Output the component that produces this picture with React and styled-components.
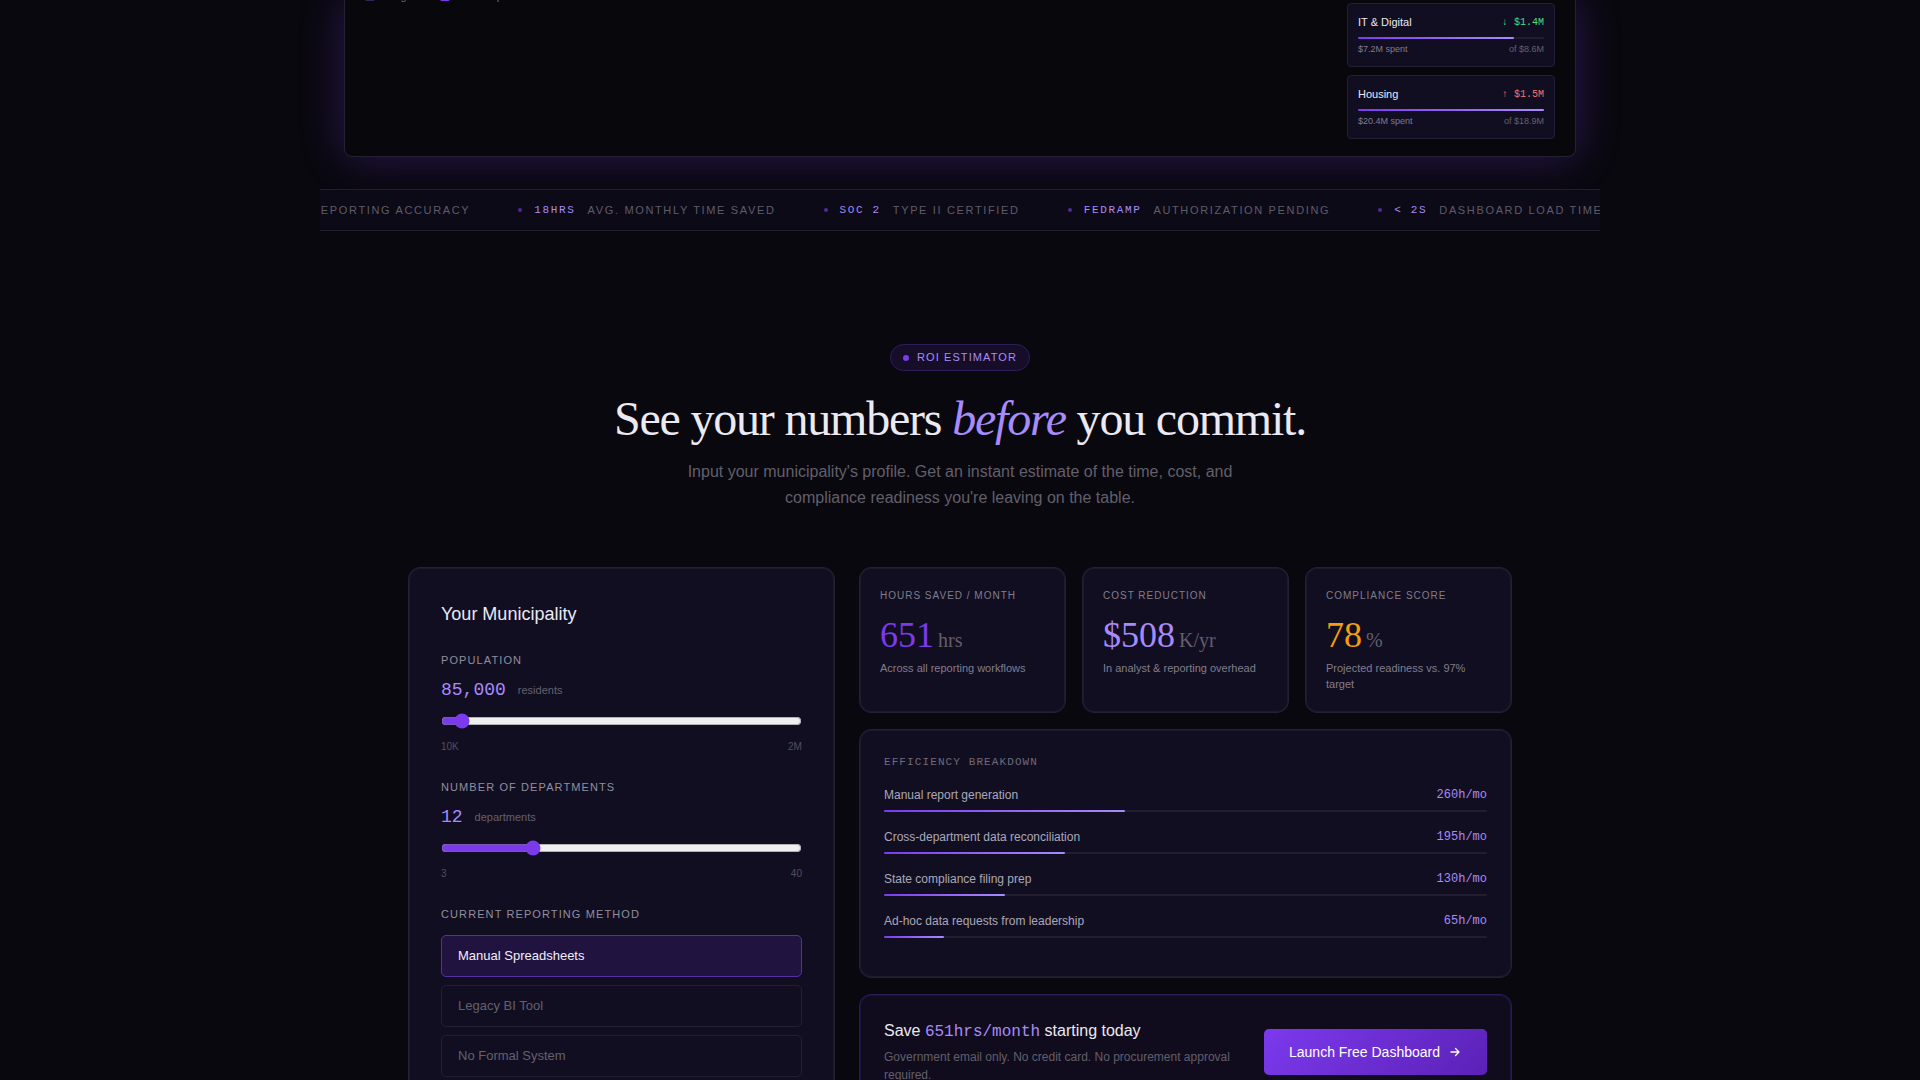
import React, { useState } from "react";
import styled, { createGlobalStyle } from "styled-components";

const sans = `"Liberation Sans", Arial, sans-serif`;
const serif = `"Liberation Serif", "Times New Roman", serif`;
const mono = `"Liberation Mono", "Courier New", monospace`;

const GlobalStyle = createGlobalStyle`
  *, *::before, *::after { box-sizing: border-box; }
  body {
    margin: 0;
    background: #09080e;
    color: #ebe9f2;
    font-family: ${sans};
    font-size: 16px;
    line-height: 24px;
  }
  h2, h3, p, fieldset, legend { margin: 0; padding: 0; }
`;

const Page = styled.div`
  height: 100vh;
  overflow: hidden;
`;

const Hero = styled.section`
  max-width: 1280px;
  margin: 0 auto;
`;

const Preview = styled.div`
  display: flex;
  justify-content: space-between;
  margin: 0 24px 32px;
  padding: 0 20px 17px;
  border: 1px solid #252133;
  border-top: 0;
  border-radius: 0 0 8px 8px;
  background: #08070c;
  box-shadow: 0 0 44px rgba(116, 58, 237, 0.32);
`;

const Legend = styled.div`
  display: flex;
  gap: 24px;
  height: 16px;
  margin-top: -12px;
  font-size: 11px;
  line-height: 16px;
  color: #6b6878;
`;

const LegendItem = styled.span`
  display: flex;
  align-items: center;
  gap: 6px;

  &::before {
    content: "";
    width: 10px;
    height: 10px;
    border-radius: 2px;
    background: ${(p) => p.$color};
  }
`;

const BudgetList = styled.div`
  display: flex;
  flex-direction: column;
  gap: 8px;
  width: 208px;
  padding-top: 3px;
`;

const BudgetCard = styled.article`
  padding: 10px;
  border: 1px solid #241f35;
  border-radius: 4px;
  background: #120e22;
`;

const Split = styled.div`
  display: flex;
  justify-content: space-between;
  align-items: center;
`;

const BudgetName = styled.span`
  font-size: 11px;
  line-height: 17px;
`;

const BudgetDelta = styled.span`
  font-family: ${mono};
  font-size: 10px;
  line-height: 15px;
  color: ${(p) => (p.$over ? "#f87171" : "#4ade80")};
`;

const BudgetNote = styled.span`
  font-size: 9px;
  line-height: 13px;
  color: ${(p) => (p.$dim ? "#63606d" : "#807d8b")};
`;

const Track = styled.div`
  height: 2px;
  margin: ${(p) => p.$margin || "0"};
  border-radius: 1px;
  background: #221e30;
`;

const Fill = styled.div`
  height: 100%;
  border-radius: 1px;
  background: linear-gradient(90deg, #7c3aed, #a78bfa);
`;

const Ticker = styled.div`
  overflow: hidden;
  border-top: 1px solid #221f2d;
  border-bottom: 1px solid #221f2d;
  background: #0c0a17;
  padding: 12px 0;
`;

const TickerTrack = styled.div`
  display: flex;
  width: max-content;
  transform: translateX(-102px);
`;

const TickerItem = styled.span`
  display: flex;
  align-items: center;
  gap: 12px;
  padding: 0 24px;
  font-size: 11px;
  line-height: 16px;
  letter-spacing: 0.15em;
  text-transform: uppercase;
  white-space: nowrap;
  color: #5f5c69;

  &::before {
    content: "";
    width: 4px;
    height: 4px;
    border-radius: 50%;
    background: #4f2a9a;
  }

  strong {
    font-family: ${mono};
    font-weight: 500;
    color: #a78bfa;
  }
`;

const Estimator = styled.section`
  max-width: 1200px;
  margin: 0 auto;
  padding: 113px 48px 112px;
`;

const Intro = styled.header`
  display: flex;
  flex-direction: column;
  align-items: center;
  margin-bottom: 56px;
  text-align: center;
`;

const Badge = styled.span`
  display: flex;
  align-items: center;
  gap: 8px;
  margin-bottom: 24px;
  padding: 4px 12px;
  border: 1px solid #2f1d5c;
  border-radius: 14px;
  background: #160e29;
  font-size: 11px;
  line-height: 17px;
  letter-spacing: 0.1em;
  text-transform: uppercase;
  color: #a78bfa;

  &::before {
    content: "";
    width: 6px;
    height: 6px;
    border-radius: 50%;
    background: #7c3aed;
  }
`;

const Title = styled.h2`
  margin-bottom: 16px;
  font-family: ${serif};
  font-size: 48px;
  font-weight: 400;
  line-height: 48px;
  letter-spacing: -0.025em;

  em { color: #a78bfa; }
`;

const Lead = styled.p`
  max-width: 560px;
  line-height: 26px;
  color: #625f6b;
`;

const Columns = styled.div`
  display: grid;
  grid-template-columns: 17fr 26fr;
  gap: 24px;
`;

const Results = styled.div`
  display: flex;
  flex-direction: column;
  gap: 16px;
`;

const Card = styled.div`
  padding: ${(p) => p.$pad || "24px"};
  border: 1px solid ${(p) => (p.$accent ? "#281d56" : "#242032")};
  border-radius: 12px;
  background: ${(p) => (p.$accent ? "#100c1d" : "#120e21")};
  box-shadow: inset 0 0 0 1px ${(p) => (p.$accent ? "#19133d" : "#1e1a2d")};
`;

const CardTitle = styled.h3`
  margin-bottom: 22px;
  font-size: 18px;
  font-weight: 400;
  line-height: 29px;
`;

const Field = styled.div`
  margin-bottom: 23px;
`;

const Caps = `
  display: block;
  font-size: 11px;
  line-height: 18px;
  letter-spacing: 0.1em;
  text-transform: uppercase;
  color: #918e9d;
`;

const FieldLabel = styled.label`
  ${Caps}
`;

const Reading = styled.div`
  display: flex;
  align-items: center;
  gap: 12px;
  margin: 8px 0;
  font-size: 11px;
  line-height: 27px;
  color: #63606d;

  output {
    font-family: ${mono};
    font-size: 18px;
    color: #a78bfa;
  }
`;

const Range = styled.input`
  display: block;
  width: 100%;
  height: 18px;
  margin: 0 0 8px;
  accent-color: #7c3aed;
  cursor: pointer;
`;

const Bounds = styled(Split)`
  font-size: 10px;
  line-height: 17px;
  color: #514e5c;
`;

const Methods = styled.fieldset`
  border: 0;

  legend { ${Caps} margin-bottom: 12px; }
`;

const MethodList = styled.div`
  display: flex;
  flex-direction: column;
  gap: 8px;
`;

const Method = styled.button`
  padding: 10px 16px;
  border: 1px solid ${(p) => (p.$active ? "#56309f" : "#231f32")};
  border-radius: 5px;
  background: ${(p) => (p.$active ? "#211340" : "transparent")};
  color: ${(p) => (p.$active ? "#f0eef6" : "#63606d")};
  font-family: ${sans};
  font-size: 13px;
  line-height: 20px;
  text-align: left;
  cursor: pointer;
`;

const Metrics = styled.div`
  display: grid;
  grid-template-columns: repeat(3, 1fr);
  gap: 16px;
`;

const MetricLabel = styled.div`
  margin-bottom: 12px;
  font-size: 10px;
  line-height: 15px;
  letter-spacing: 0.1em;
  text-transform: uppercase;
  color: #807d8b;
`;

const MetricValue = styled.div`
  margin-bottom: 5px;
  font-family: ${serif};
  font-size: 36px;
  line-height: 40px;
  color: ${(p) => p.$color};

  small {
    margin-left: 4px;
    font-size: 20px;
    line-height: 20px;
    color: #625f6b;
  }
`;

const MetricNote = styled.p`
  font-size: 11px;
  line-height: 16px;
  color: #807d8b;
`;

const Overline = styled.h3`
  margin-bottom: 15px;
  font-family: ${mono};
  font-size: 11px;
  font-weight: 400;
  line-height: 16px;
  letter-spacing: 0.1em;
  text-transform: uppercase;
  color: #6e6b7a;
`;

const Breakdown = styled.div`
  margin-bottom: 15px;
  font-size: 12px;
  line-height: 20px;
  color: #aba8b7;

  span:last-child {
    font-family: ${mono};
    color: #a78bfa;
  }
`;

const Offer = styled(Split)`
  gap: 24px;
`;

const OfferTitle = styled.h3`
  margin-bottom: 4px;
  font-size: 16px;
  font-weight: 400;
  line-height: 24px;

  span {
    font-family: ${mono};
    color: #a78bfa;
  }
`;

const OfferNote = styled.p`
  font-size: 12px;
  line-height: 18px;
  color: #625f6b;
`;

const Launch = styled.button`
  display: flex;
  flex-shrink: 0;
  align-items: center;
  gap: 8px;
  padding: 12px 25px;
  border: 0;
  border-radius: 5px;
  background: linear-gradient(135deg, #7c3aed, #5b21b6);
  color: #fff;
  font-family: ${sans};
  font-size: 14px;
  line-height: 22px;
  cursor: pointer;
`;

const budgets = [
  { name: "IT & Digital", delta: "↓ $1.4M", spent: "$7.2M", total: "$8.6M", used: 84 },
  { name: "Housing", delta: "↑ $1.5M", spent: "$20.4M", total: "$18.9M", used: 100, over: true },
];

const facts = [
  ["99.7%", "Reporting accuracy"],
  ["18hrs", "Avg. monthly time saved"],
  ["SOC 2", "Type II certified"],
  ["FedRAMP", "Authorization pending"],
  ["< 2s", "Dashboard load time"],
];

const metrics = [
  { label: "Hours saved / month", value: "651", unit: "hrs", note: "Across all reporting workflows", color: "#7c3aed" },
  { label: "Cost reduction", value: "$508", unit: "K/yr", note: "In analyst & reporting overhead", color: "#a78bfa" },
  { label: "Compliance score", value: "78", unit: "%", note: "Projected readiness vs. 97% target", color: "#f59e0b" },
];

const tasks = [
  { name: "Manual report generation", hours: "260h/mo", share: 40 },
  { name: "Cross-department data reconciliation", hours: "195h/mo", share: 30 },
  { name: "State compliance filing prep", hours: "130h/mo", share: 20 },
  { name: "Ad-hoc data requests from leadership", hours: "65h/mo", share: 10 },
];

const methods = ["Manual Spreadsheets", "Legacy BI Tool", "No Formal System"];

function Slider({ id, label, unit, min, max, step, minLabel, maxLabel, initial }) {
  const [value, setValue] = useState(initial);
  return (
    <Field>
      <FieldLabel htmlFor={id}>{label}</FieldLabel>
      <Reading>
        <output htmlFor={id}>{value.toLocaleString("en-US")}</output>
        <span>{unit}</span>
      </Reading>
      <Range
        id={id}
        type="range"
        min={min}
        max={max}
        step={step}
        value={value}
        onChange={(e) => setValue(Number(e.target.value))}
      />
      <Bounds>
        <span>{minLabel}</span>
        <span>{maxLabel}</span>
      </Bounds>
    </Field>
  );
}

export default function App() {
  const [method, setMethod] = useState(methods[0]);
  return (
    <Page>
      <GlobalStyle />
      <Hero>
        <Preview>
          <Legend>
            <LegendItem $color="#2f2757">Budget</LegendItem>
            <LegendItem $color="#7c3aed">Actual Spend</LegendItem>
          </Legend>
          <BudgetList>
            {budgets.map((b) => (
              <BudgetCard key={b.name}>
                <Split>
                  <BudgetName>{b.name}</BudgetName>
                  <BudgetDelta $over={b.over}>{b.delta}</BudgetDelta>
                </Split>
                <Track $margin="6px 0 4px">
                  <Fill style={{ width: `${b.used}%` }} />
                </Track>
                <Split>
                  <BudgetNote>{b.spent} spent</BudgetNote>
                  <BudgetNote $dim>of {b.total}</BudgetNote>
                </Split>
              </BudgetCard>
            ))}
          </BudgetList>
        </Preview>
        <Ticker>
          <TickerTrack>
            {facts.map(([figure, text]) => (
              <TickerItem key={figure}>
                <strong>{figure}</strong>
                <span>{text}</span>
              </TickerItem>
            ))}
          </TickerTrack>
        </Ticker>
      </Hero>

      <Estimator>
        <Intro>
          <Badge>ROI Estimator</Badge>
          <Title>
            See your numbers <em>before</em> you commit.
          </Title>
          <Lead>
            Input your municipality's profile. Get an instant estimate of the time, cost, and
            compliance readiness you're leaving on the table.
          </Lead>
        </Intro>

        <Columns>
          <Card $pad="32px">
            <CardTitle>Your Municipality</CardTitle>
            <Slider id="population" label="Population" unit="residents" min={10000} max={2000000} step={5000} minLabel="10K" maxLabel="2M" initial={85000} />
            <Slider id="departments" label="Number of departments" unit="departments" min={3} max={40} step={1} minLabel="3" maxLabel="40" initial={12} />
            <Methods>
              <legend>Current reporting method</legend>
              <MethodList>
                {methods.map((m) => (
                  <Method key={m} type="button" $active={m === method} aria-pressed={m === method} onClick={() => setMethod(m)}>
                    {m}
                  </Method>
                ))}
              </MethodList>
            </Methods>
          </Card>

          <Results>
            <Metrics>
              {metrics.map((m) => (
                <Card key={m.label} $pad="20px">
                  <MetricLabel>{m.label}</MetricLabel>
                  <MetricValue $color={m.color}>
                    {m.value}
                    <small>{m.unit}</small>
                  </MetricValue>
                  <MetricNote>{m.note}</MetricNote>
                </Card>
              ))}
            </Metrics>

            <Card>
              <Overline>Efficiency breakdown</Overline>
              {tasks.map((t) => (
                <Breakdown key={t.name}>
                  <Split>
                    <span>{t.name}</span>
                    <span>{t.hours}</span>
                  </Split>
                  <Track $margin="5px 0 0">
                    <Fill style={{ width: `${t.share}%` }} />
                  </Track>
                </Breakdown>
              ))}
            </Card>

            <Card $accent>
              <Offer>
                <div>
                  <OfferTitle>
                    Save <span>651hrs/month</span> starting today
                  </OfferTitle>
                  <OfferNote>Government email only. No credit card. No procurement approval required.</OfferNote>
                </div>
                <Launch type="button">
                  Launch Free Dashboard
                  <svg width="14" height="14" viewBox="0 0 14 14" fill="none" stroke="currentColor" strokeWidth="1.3" strokeLinecap="round" strokeLinejoin="round" aria-hidden="true">
                    <path d="M3 7h8M7.5 3.5 11 7l-3.5 3.5" />
                  </svg>
                </Launch>
              </Offer>
            </Card>
          </Results>
        </Columns>
      </Estimator>
    </Page>
  );
}
